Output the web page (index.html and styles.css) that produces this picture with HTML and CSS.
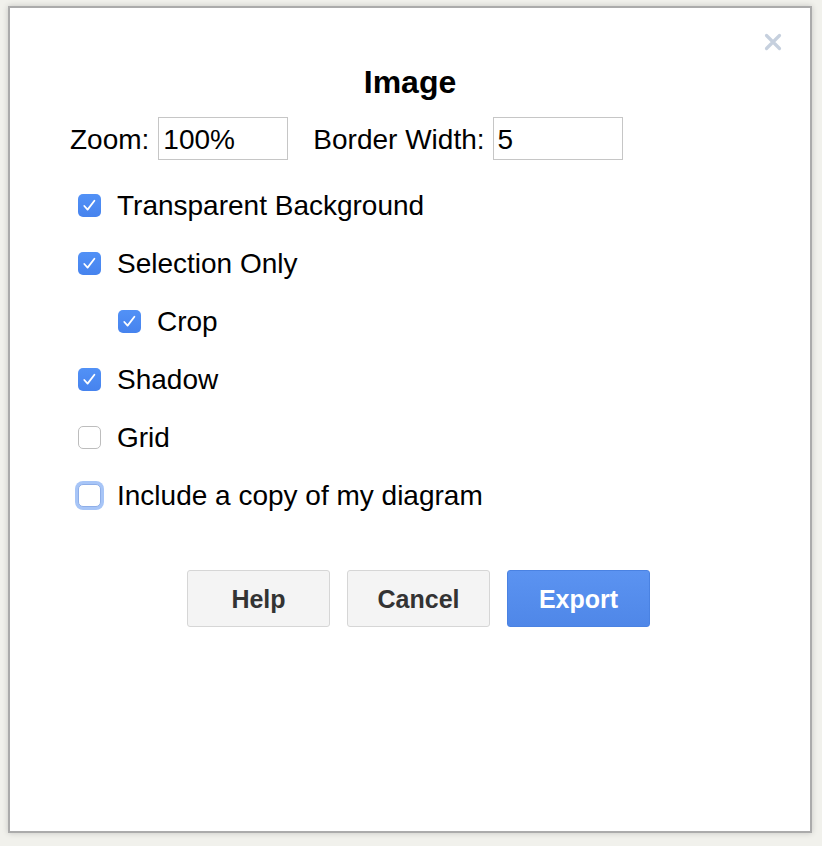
FILE: index.html
```html
<!DOCTYPE html>
<html>
<head>
<meta charset="utf-8">
<link rel="stylesheet" href="styles.css">
</head>
<body>
<div class="dialog">
  <svg class="close" width="18" height="18" viewBox="0 0 18 18"><path d="M2.5 2.5 L15.5 15.5 M15.5 2.5 L2.5 15.5" stroke="#c6d0de" stroke-width="3.2" stroke-linecap="round"/></svg>
  <div class="title">Image</div>
  <div class="fieldrow">
    <span class="lbl">Zoom:</span>
    <span class="input first">100%</span>
    <span class="lbl second">Border Width:</span>
    <span class="input">5</span>
  </div>
  <div class="checks">
    <div class="row"><span class="cb on"><svg width="23" height="23" viewBox="0 0 23 23"><path d="M6.3 12 L9.6 15.6 L16.4 6.8" fill="none" stroke="#fff" stroke-width="1.8" stroke-linecap="round" stroke-linejoin="round"/></svg></span><span class="text">Transparent Background</span></div>
    <div class="row"><span class="cb on"><svg width="23" height="23" viewBox="0 0 23 23"><path d="M6.3 12 L9.6 15.6 L16.4 6.8" fill="none" stroke="#fff" stroke-width="1.8" stroke-linecap="round" stroke-linejoin="round"/></svg></span><span class="text">Selection Only</span></div>
    <div class="row indent"><span class="cb on"><svg width="23" height="23" viewBox="0 0 23 23"><path d="M6.3 12 L9.6 15.6 L16.4 6.8" fill="none" stroke="#fff" stroke-width="1.8" stroke-linecap="round" stroke-linejoin="round"/></svg></span><span class="text">Crop</span></div>
    <div class="row"><span class="cb on"><svg width="23" height="23" viewBox="0 0 23 23"><path d="M6.3 12 L9.6 15.6 L16.4 6.8" fill="none" stroke="#fff" stroke-width="1.8" stroke-linecap="round" stroke-linejoin="round"/></svg></span><span class="text">Shadow</span></div>
    <div class="row"><span class="cb off"></span><span class="text">Grid</span></div>
    <div class="row"><span class="cb off focus"></span><span class="text">Include a copy of my diagram</span></div>
  </div>
  <div class="buttons">
    <div class="btn">Help</div>
    <div class="btn">Cancel</div>
    <div class="btn primary">Export</div>
  </div>
</div>
</body>
</html>
```
FILE: styles.css
```css
html, body {
  margin: 0;
  padding: 0;
}
body {
  width: 822px;
  height: 846px;
  background: #f1f1ec;
  font-family: "Liberation Sans", Arial, sans-serif;
  color: #000;
  overflow: hidden;
  padding-top: 6px;
  box-sizing: border-box;
}
.dialog {
  position: relative;
  margin-left: 8px;
  width: 800px;
  height: 823px;
  border: 2px solid #ababab;
  background: #fff;
  box-shadow: 0 0 6px rgba(0, 0, 0, 0.18);
}
.close {
  position: absolute;
  top: 25px;
  right: 28px;
}
.title {
  margin-top: 56px;
  text-align: center;
  font-size: 32px;
  line-height: 36px;
  font-weight: bold;
}
.fieldrow {
  display: flex;
  align-items: center;
  margin-top: 17px;
  padding-left: 60px;
  height: 43px;
  font-size: 28px;
}
.lbl {
  white-space: nowrap;
  padding-top: 3px;
}
.second {
  margin-left: 25px;
}
.input {
  box-sizing: border-box;
  width: 130px;
  height: 43px;
  margin-left: 8px;
  border: 1px solid #c6c6c6;
  padding: 2px 4px 0;
  line-height: 39px;
  font-size: 28px;
}
.input.first {
  margin-left: 9px;
}
.checks {
  margin-top: 16px;
  padding-left: 68px;
}
.row {
  display: flex;
  align-items: center;
  height: 58px;
  font-size: 28px;
}
.row .text {
  padding-top: 2px;
}
.row.indent {
  padding-left: 40px;
}
.cb {
  box-sizing: border-box;
  width: 23px;
  height: 23px;
  border-radius: 5px;
  flex: none;
  margin-right: 16px;
  display: block;
}
.cb svg {
  display: block;
}
.cb.on {
  background: linear-gradient(#5291f6, #4683ee);
}
.cb.off {
  background: #fff;
  border: 1px solid #bdbdbd;
}
.cb.focus {
  border: 1px solid #8eaee8;
  box-shadow: 0 0 0 3px #a7c5f7;
}
.buttons {
  display: flex;
  gap: 17px;
  margin-top: 46px;
  padding-left: 177px;
}
.btn {
  box-sizing: border-box;
  width: 143px;
  height: 57px;
  border: 1px solid #d6d6d6;
  border-radius: 3px;
  background: #f4f4f4;
  color: #333;
  font-size: 25px;
  font-weight: bold;
  text-align: center;
  line-height: 57px;
}
.btn.primary {
  background: linear-gradient(#5b93f1, #4f87e8);
  border-color: #4a82e2;
  color: #fff;
}
```
